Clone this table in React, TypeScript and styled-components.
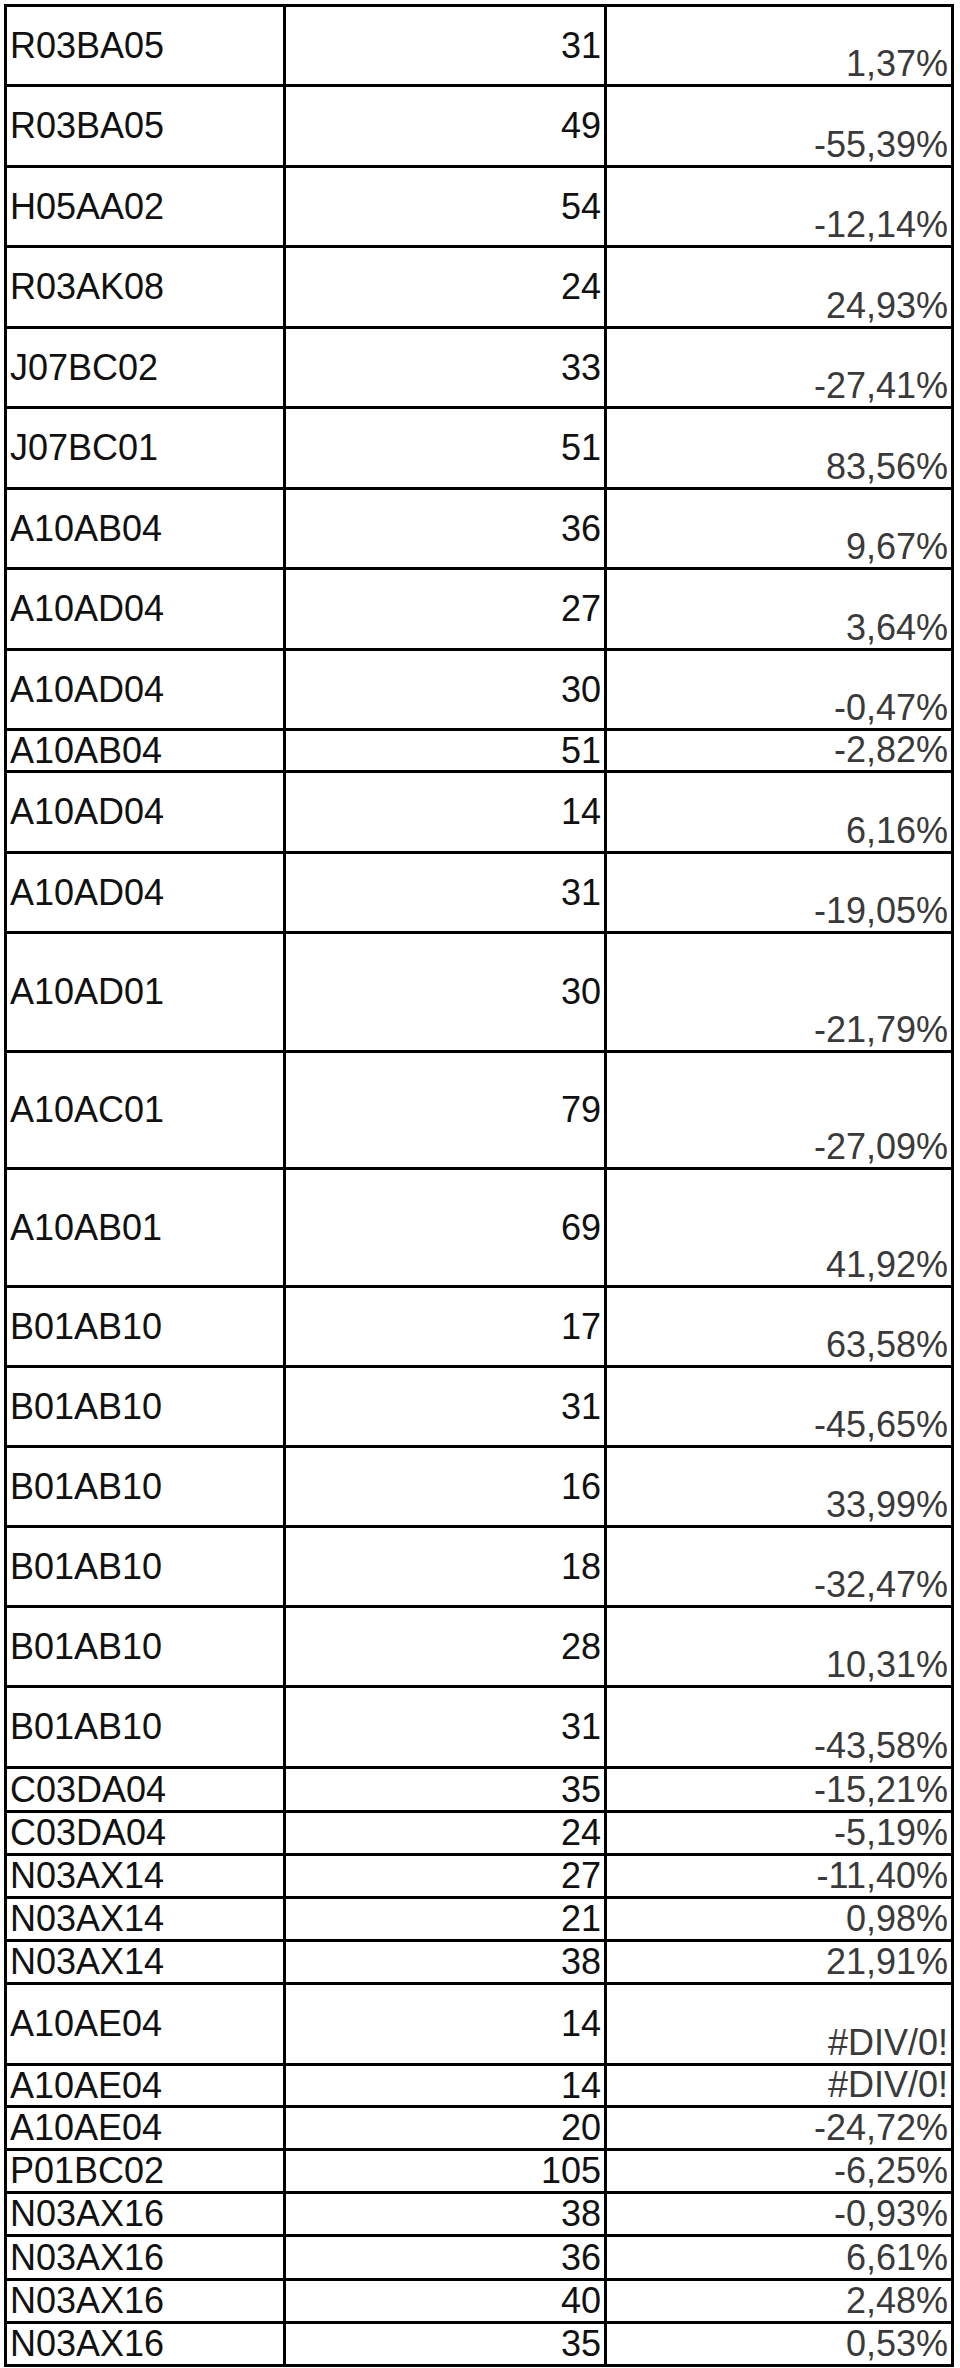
import React from "react";
import styled, { createGlobalStyle } from "styled-components";

const GlobalStyle = createGlobalStyle`
  html, body {
    margin: 0;
    padding: 0;
    background: #ffffff;
  }
  body {
    font-family: "Liberation Sans", Arial, sans-serif;
  }
`;

type Row = { code: string; count: string; change: string; h: number };

const rows: Row[] = [
  { code: "R03BA05", count: "31", change: "1,37%", h: 80 },
  { code: "R03BA05", count: "49", change: "-55,39%", h: 81 },
  { code: "H05AA02", count: "54", change: "-12,14%", h: 80 },
  { code: "R03AK08", count: "24", change: "24,93%", h: 81 },
  { code: "J07BC02", count: "33", change: "-27,41%", h: 80 },
  { code: "J07BC01", count: "51", change: "83,56%", h: 81 },
  { code: "A10AB04", count: "36", change: "9,67%", h: 80 },
  { code: "A10AD04", count: "27", change: "3,64%", h: 81 },
  { code: "A10AD04", count: "30", change: "-0,47%", h: 80 },
  { code: "A10AB04", count: "51", change: "-2,82%", h: 42 },
  { code: "A10AD04", count: "14", change: "6,16%", h: 81 },
  { code: "A10AD04", count: "31", change: "-19,05%", h: 80 },
  { code: "A10AD01", count: "30", change: "-21,79%", h: 119 },
  { code: "A10AC01", count: "79", change: "-27,09%", h: 117 },
  { code: "A10AB01", count: "69", change: "41,92%", h: 118 },
  { code: "B01AB10", count: "17", change: "63,58%", h: 80 },
  { code: "B01AB10", count: "31", change: "-45,65%", h: 80 },
  { code: "B01AB10", count: "16", change: "33,99%", h: 80 },
  { code: "B01AB10", count: "18", change: "-32,47%", h: 80 },
  { code: "B01AB10", count: "28", change: "10,31%", h: 80 },
  { code: "B01AB10", count: "31", change: "-43,58%", h: 81 },
  { code: "C03DA04", count: "35", change: "-15,21%", h: 44 },
  { code: "C03DA04", count: "24", change: "-5,19%", h: 43 },
  { code: "N03AX14", count: "27", change: "-11,40%", h: 43 },
  { code: "N03AX14", count: "21", change: "0,98%", h: 43 },
  { code: "N03AX14", count: "38", change: "21,91%", h: 43 },
  { code: "A10AE04", count: "14", change: "#DIV/0!", h: 81 },
  { code: "A10AE04", count: "14", change: "#DIV/0!", h: 42 },
  { code: "A10AE04", count: "20", change: "-24,72%", h: 43 },
  { code: "P01BC02", count: "105", change: "-6,25%", h: 43 },
  { code: "N03AX16", count: "38", change: "-0,93%", h: 43 },
  { code: "N03AX16", count: "36", change: "6,61%", h: 44 },
  { code: "N03AX16", count: "40", change: "2,48%", h: 43 },
  { code: "N03AX16", count: "35", change: "0,53%", h: 43 },
];

const Page = styled.div`
  padding: 4px 0 0 4px;
`;

const Sheet = styled.div`
  width: 950px;
  box-sizing: border-box;
  border-top: 3px solid #000;
  border-left: 3px solid #000;
  display: flex;
  flex-direction: column;
`;

const SheetRow = styled.div<{ $h: number }>`
  display: grid;
  grid-template-columns: 279px 321px 347px;
  height: ${(p) => p.$h}px;
`;

const Cell = styled.div<{ $align: "left" | "right"; $valign: "center" | "bottom"; $tone: "ink" | "muted" }>`
  box-sizing: border-box;
  border-right: 3px solid #000;
  border-bottom: 3px solid #000;
  display: flex;
  align-items: ${(p) => (p.$valign === "center" ? "center" : "flex-end")};
  justify-content: ${(p) => (p.$align === "left" ? "flex-start" : "flex-end")};
  padding: ${(p) =>
    p.$align === "left" ? "0 0 0 3px" : p.$valign === "bottom" ? "0 3px 2px 0" : "0 3px 0 0"};
  font-size: 36px;
  line-height: 36px;
  color: ${(p) => (p.$tone === "ink" ? "#111" : "#3a3a3a")};
  white-space: nowrap;
`;

export default function App() {
  return (
    <>
      <GlobalStyle />
      <Page>
        <Sheet>
          {rows.map((r, i) => (
            <SheetRow key={i} $h={r.h}>
              <Cell $align="left" $valign="center" $tone="ink">
                {r.code}
              </Cell>
              <Cell $align="right" $valign="center" $tone="ink">
                {r.count}
              </Cell>
              <Cell $align="right" $valign="bottom" $tone="muted">
                {r.change}
              </Cell>
            </SheetRow>
          ))}
        </Sheet>
      </Page>
    </>
  );
}
